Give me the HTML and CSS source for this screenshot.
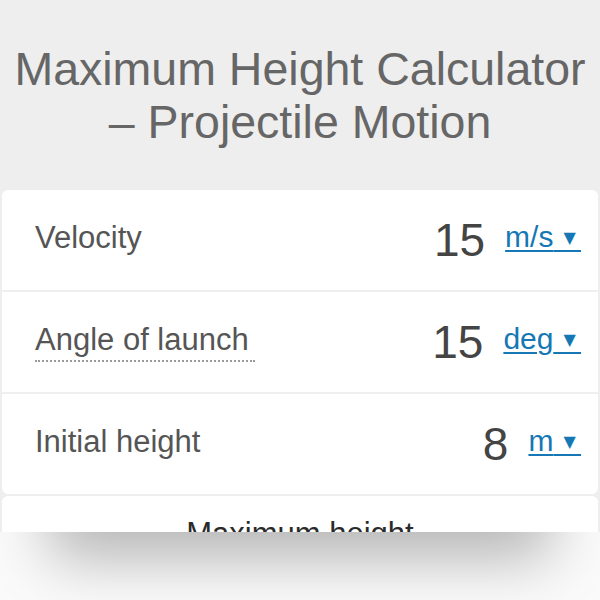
FILE: index.html
```html
<!DOCTYPE html>
<html lang="en">
<head>
<meta charset="utf-8">
<title>Maximum Height Calculator – Projectile Motion</title>
<link rel="stylesheet" href="styles.css">
</head>
<body>
<div class="frame">
  <header class="head">
    <h1 class="title">Maximum Height Calculator<br>– Projectile Motion</h1>
  </header>
  <section class="card">
    <div class="row">
      <span class="label">Velocity</span>
      <span class="value">
        <span class="num">15</span>
        <a class="unit" href="#">m/s<span class="caret">&nbsp;&nbsp;▼&nbsp;</span></a>
      </span>
    </div>
    <div class="row">
      <span class="label dotted">Angle of launch</span>
      <span class="value">
        <span class="num">15</span>
        <a class="unit" href="#">deg<span class="caret">&nbsp;&nbsp;▼&nbsp;</span></a>
      </span>
    </div>
    <div class="row">
      <span class="label">Initial height</span>
      <span class="value">
        <span class="num">8</span>
        <a class="unit" href="#">m<span class="caret">&nbsp;&nbsp;▼&nbsp;</span></a>
      </span>
    </div>
  </section>
  <section class="card result">
    <div class="result-title">Maximum height</div>
  </section>
</div>
</body>
</html>
```
FILE: styles.css
```css
html, body {
  margin: 0;
  padding: 0;
}

body {
  background: #fafafa;
  font-family: "Liberation Sans", Arial, sans-serif;
  width: 600px;
  height: 600px;
  overflow: hidden;
}

/* calculator panel, clipped at the fold with a soft drop shadow */
.frame {
  width: 600px;
  height: 532px;
  overflow: hidden;
  background: #eeeeee;
  box-shadow: 0 76px 56px -50px rgba(0, 0, 0, 0.28);
}

.head {
  height: 190px;
  box-sizing: border-box;
  padding-top: 43px;
}

.title {
  margin: 0;
  text-align: center;
  font-weight: normal;
  font-size: 46.5px;
  line-height: 53px;
  color: #666666;
}

.card {
  margin: 0 2px;
  background: #efefef;
  border-radius: 6px;
  display: flex;
  flex-direction: column;
  gap: 2px;
}

.card + .card {
  margin-top: 2px;
}

.row {
  height: 100px;
  background: #ffffff;
  display: flex;
  align-items: center;
  justify-content: space-between;
  padding: 0 17px 0 33px;
}

.row:first-child {
  border-radius: 6px 6px 0 0;
}

.row:last-child {
  border-radius: 0 0 6px 6px;
}

.label {
  font-size: 31px;
  line-height: 1;
  color: #555555;
  margin-bottom: 6px;
}

.label.dotted {
  border-bottom: 2px dotted #9a9a9a;
  padding: 0 6px 5px 0;
  margin-bottom: 0;
  margin-top: 1px;
}

.value {
  display: flex;
  align-items: center;
  gap: 20px;
}

.num {
  font-size: 46px;
  line-height: 1;
  color: #444444;
}

.unit {
  font-size: 30px;
  line-height: 1;
  color: #1578b4;
  text-decoration: underline;
  text-decoration-thickness: 2px;
  text-underline-offset: 3px;
  margin-bottom: 6px;
}

.caret {
  font-size: 16px;
  font-family: "DejaVu Sans", sans-serif;
  vertical-align: 4px;
}

.result {
  height: 120px;
  background: #ffffff;
  border-radius: 6px 6px 0 0;
}

.result-title {
  padding-top: 20px;
  text-align: center;
  font-size: 31px;
  color: #2a2a2a;
}
```
